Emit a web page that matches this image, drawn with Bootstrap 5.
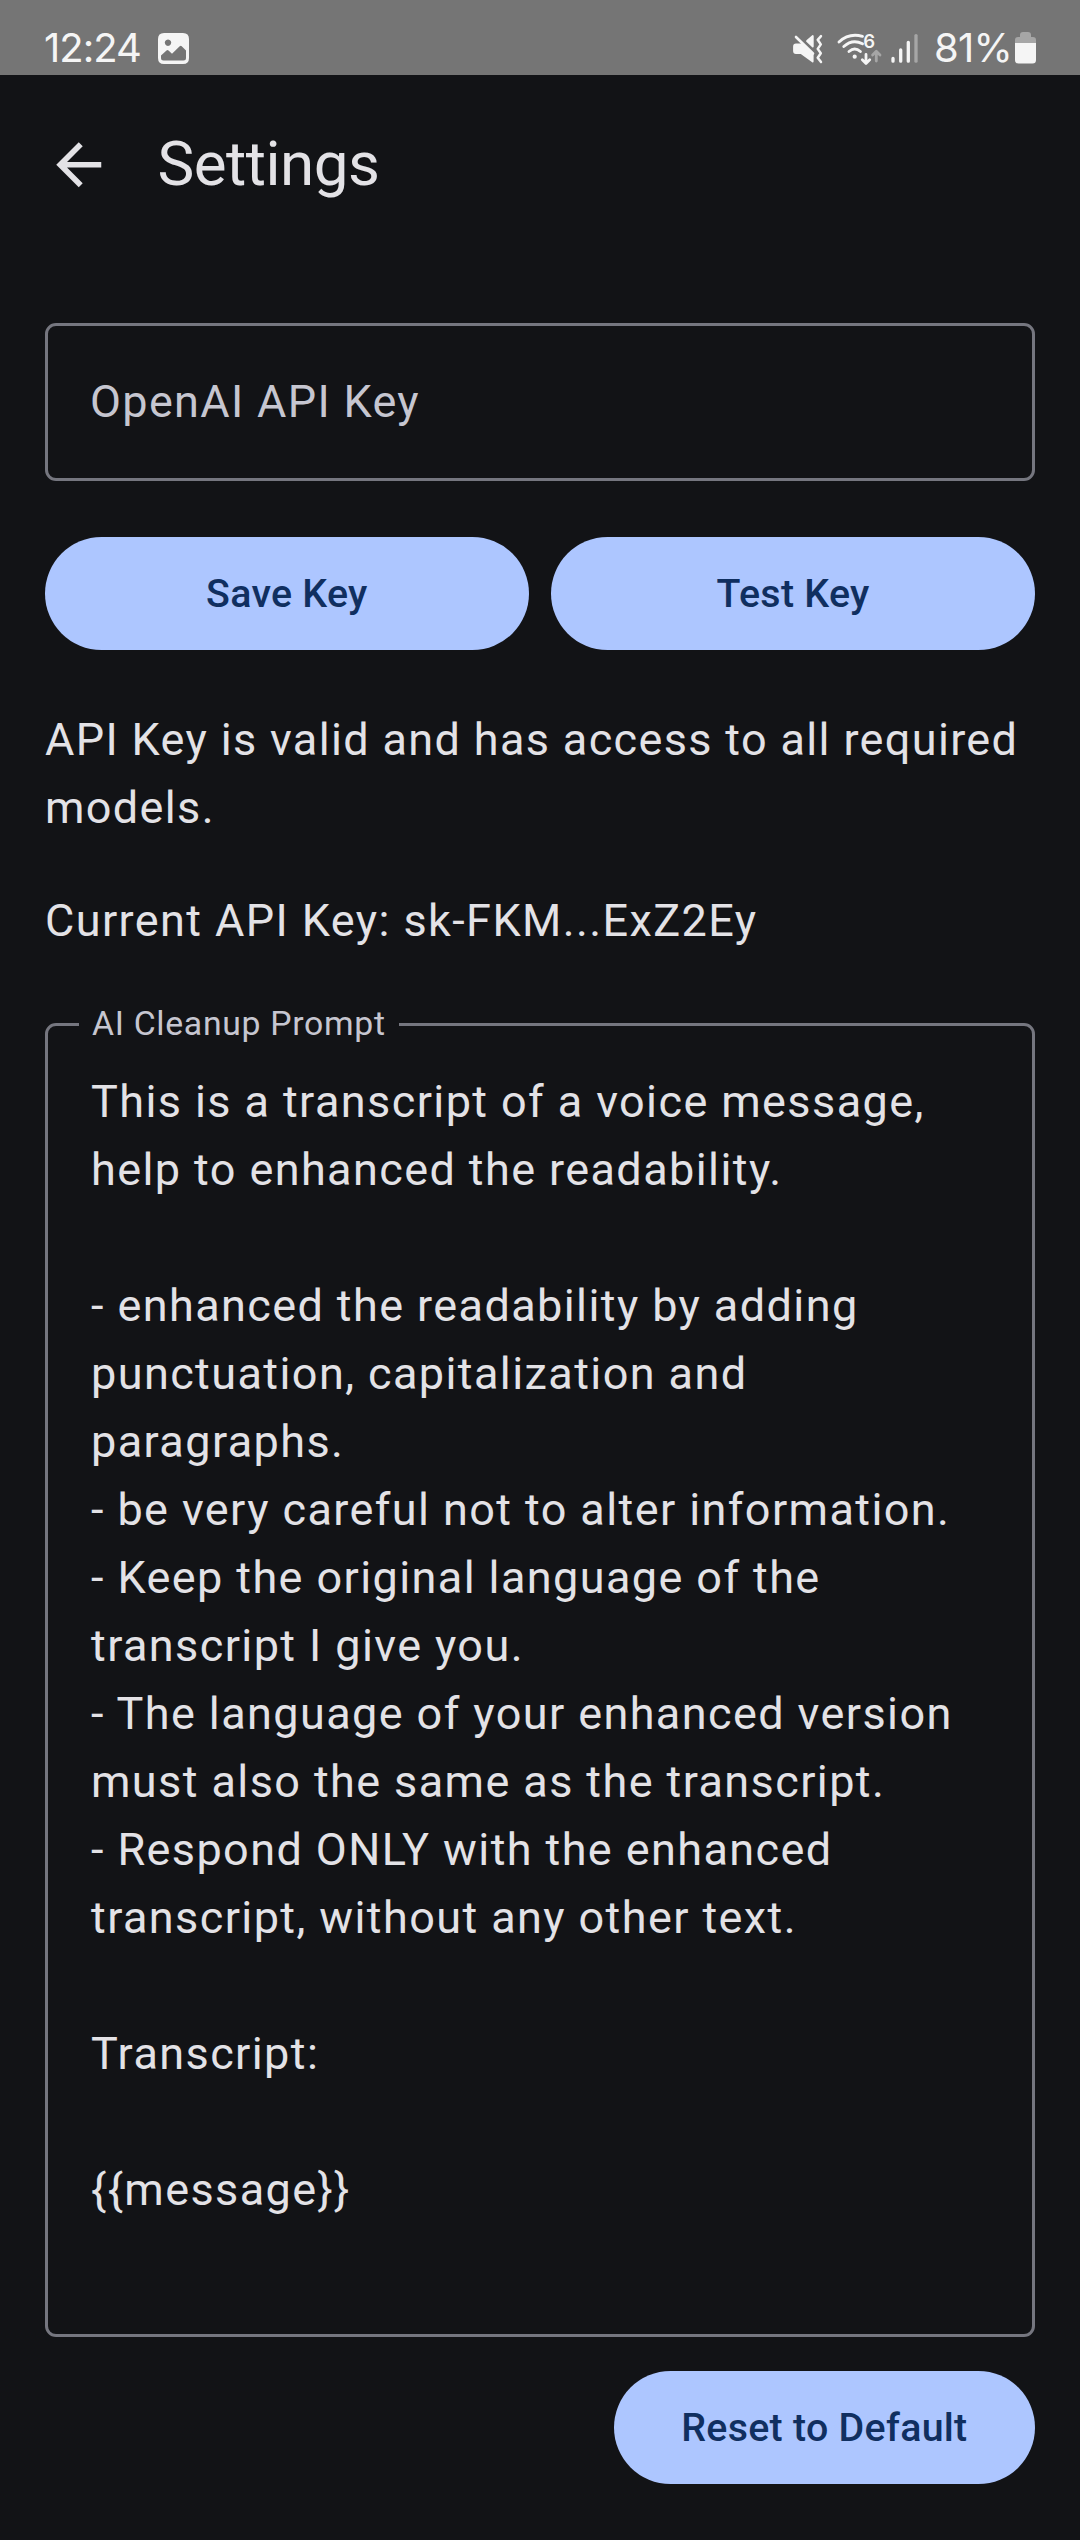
<!DOCTYPE html>
<html lang="en" data-bs-theme="dark">
<head>
<meta charset="utf-8">
<meta name="viewport" content="width=device-width, initial-scale=1">
<title>Settings</title>
<link href="https://cdn.jsdelivr.net/npm/bootstrap@5.3.0/dist/css/bootstrap.min.css" rel="stylesheet">
<style>
  body { background: #121316; color: #e3e2e6; font: 400 45px/68px Roboto, sans-serif; letter-spacing: 1.406px; min-height: 2540px; }
  .status-bar { height: 75px; background: #757575; color: #f5f5f5; padding: 23px 44px 0 44px; font: 400 40px/50px Inter, sans-serif; letter-spacing: 0; }
  .status-photo { margin: 10px 0 0 16px; }
  .status-icons { width: 140px; height: 42px; margin-top: 5px; }
  .status-battery { margin: 9px 0 0 4px; }
  .status-time { letter-spacing: -1px; width: 98px; }
  .status-pct { width: 77px; margin-left: 6px; letter-spacing: -.8px; }
  .app-bar { height: 180px; padding: 0 45px; }
  .app-title { font-size: 61.9px; line-height: 79px; letter-spacing: -.5px; margin: -2px 0 0 45px; font-weight: 400; color: #e3e2e6; }
  .settings-form { padding: 68px 45px 0; }
  .outlined { border: 3px solid #75767f; border-radius: 11px; padding: 0 42px; }
  .key-field { height: 158px; color: #c6c6d0; letter-spacing: 1.33px; }
  .prompt-field { height: 1314px; padding: 42px 40px 0 43px; margin-top: 68px; white-space: pre-wrap; }
  .field-label { left: 31px; top: -25px; padding: 0 13px; background: #121316; color: #c6c6d0; font-size: 33.75px; line-height: 45px; letter-spacing: .7px; white-space: nowrap; }
  .btn-tonal { --bs-btn-bg: #adc6ff; --bs-btn-color: #102f60; --bs-btn-border-width: 0; --bs-btn-font-size: 39.375px; --bs-btn-font-weight: 500; --bs-btn-line-height: 56px; --bs-btn-padding-x: 67.5px; height: 113px; letter-spacing: .28px; }
  .key-actions { gap: 22.5px; margin: 56px 0; }
  .key-state { margin-bottom: 45px; letter-spacing: 1.35px; }
  .form-footer { margin-top: 34px; }
</style>
</head>
<body>
<header class="status-bar d-flex align-items-start">
  <span class="status-time">12:24</span>
  <svg class="status-photo" width="31" height="31" viewBox="0 0 31 31"><path fill="#f5f5f5" fill-rule="evenodd" d="M6 0h19q6 0 6 6v19q0 6-6 6H6q-6 0-6-6V6q0-6 6-6ZM10 6.500a3.200 3.200 0 1 0 .01 0ZM3 22.500 8.500 17.500q1-.8 2 0L14 20.800 21.700 13.300q1-.9 2 0L28 17.600V25q0 2.500-2.500 2.500h-20Q3 27.500 3 25Z"/></svg>
  <svg class="status-icons ms-auto" viewBox="788 28 140 42" fill="none" stroke="#f5f5f5" stroke-width="2.8" stroke-linecap="round" stroke-linejoin="round">
    <!-- muted speaker with vibration wave -->
    <path d="M796 37 813 53.500" stroke-width="2.600"/>
    <path d="M796 44.500H802L812.700 54.500V61.500L801 53H796Q794 53 794 51V46.500Q794 44.500 796 44.500Z" fill="#f5f5f5" stroke-width="1.800"/>
    <path d="M807 41 812.800 36V46.500Z" fill="#f5f5f5" stroke-width="1.800"/>
    <path d="M821 36.200 817.700 39.800 820.800 44.400 817.700 48.900 820.800 53.300 817.700 57.700 821 62" stroke-width="2.500"/>
    <!-- wi-fi 6 with traffic arrows -->
    <path d="M839 42Q849 32.500 862.500 36.300M843.800 46.500Q852.500 38.500 862.500 43.800M849 51.500Q854.700 46.500 860.400 51.500" stroke-width="2.900"/>
    <circle cx="854.700" cy="56.700" r="2.100" fill="#f5f5f5" stroke="none"/>
    <text x="863.300" y="47.800" fill="#f5f5f5" stroke="none" font-family="Inter, sans-serif" font-size="18.500" font-weight="600">6</text>
    <path d="M866 54.500V63M862.300 59.800 866 63.400 869.700 59.800"/>
    <path d="M876.300 61V51.500M872.600 54.900 876.300 51.300 880 54.900" stroke="#a6a6a6"/>
    <!-- signal strength -->
    <path d="M893 58.500V61.200M900.700 50V61.200M908.300 42.300V61.200" stroke-width="3.300"/>
    <path d="M916 35.600V61.200" stroke="#a6a6a6" stroke-width="3.300"/>
  </svg>
  <span class="status-pct">81%</span>
  <svg class="status-battery" width="21" height="32" viewBox="0 0 21 32"><path fill="#a6a6a6" d="M5 5V3q0-3 3-3h5q3 0 3 3v2h2q3 0 3 3v4H0V8q0-3 3-3Z"/><path fill="#f5f5f5" d="M0 11h21v17q0 3.500-3.500 3.500h-14Q0 31.500 0 28Z"/></svg>
</header>
<nav class="app-bar d-flex align-items-center">
  <svg width="67.5" height="67.5" viewBox="0 0 24 24" fill="#e3e2e6"><path d="M20 11H7.83l5.59-5.59L12 4l-8 8 8 8 1.41-1.41L7.83 13H20z"/></svg>
  <h1 class="app-title">Settings</h1>
</nav>
<main class="settings-form">
  <div class="outlined key-field d-flex align-items-center">OpenAI API Key</div>
  <div class="key-actions d-flex">
    <button type="button" class="btn btn-tonal rounded-pill flex-fill w-50">Save Key</button>
    <button type="button" class="btn btn-tonal rounded-pill flex-fill w-50">Test Key</button>
  </div>
  <p class="key-state">API Key is valid and has access to all required models.</p>
  <p class="mb-0">Current API Key: sk-FKM...ExZ2Ey</p>
  <div class="outlined prompt-field position-relative"><span class="field-label position-absolute">AI Cleanup Prompt</span>This is a transcript of a voice message, help to enhanced the readability.

- enhanced the readability by adding punctuation, capitalization and paragraphs.
- be very careful not to alter information.
- Keep the original language of the transcript I give you.
- The language of your enhanced version must also the same as the transcript.
- Respond ONLY with the enhanced transcript, without any other text.

Transcript:

{{message}}</div>
  <div class="form-footer d-flex justify-content-end">
    <button type="button" class="btn btn-tonal rounded-pill">Reset to Default</button>
  </div>
</main>
<script src="https://cdn.jsdelivr.net/npm/bootstrap@5.3.0/dist/js/bootstrap.bundle.min.js"></script>
</body>
</html>
